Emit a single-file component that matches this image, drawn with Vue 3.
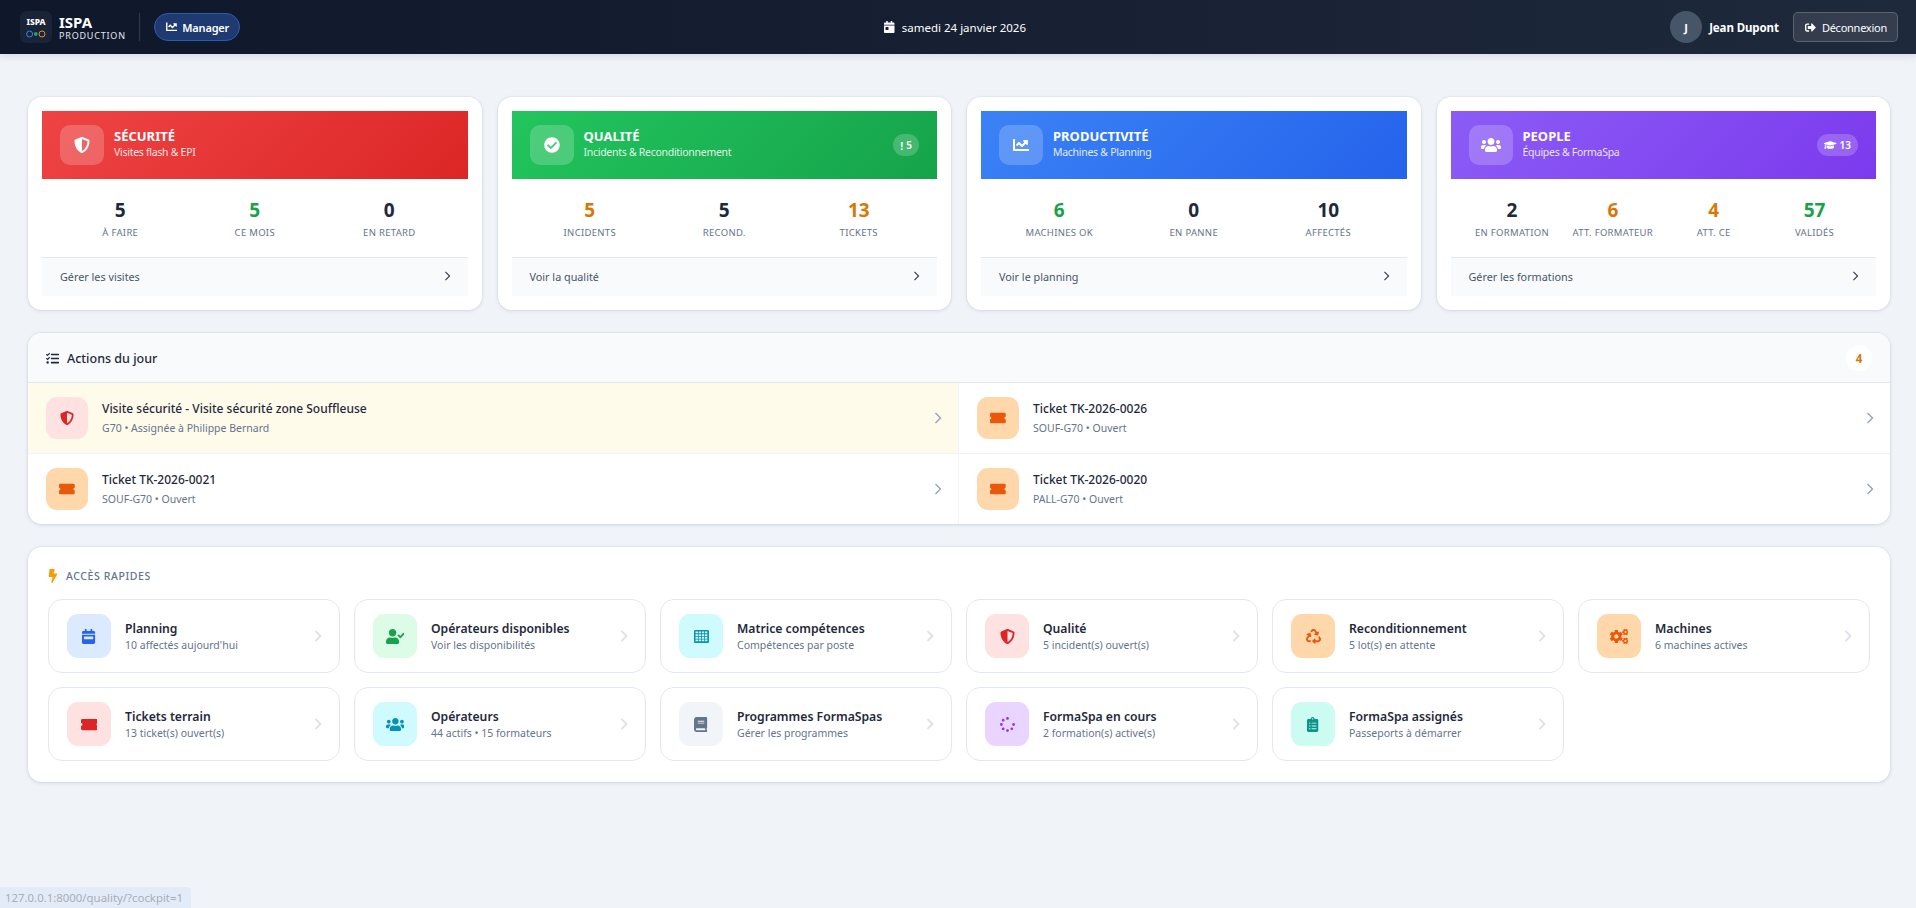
<script setup>
// FontAwesome style glyphs: [viewBox, path]
let gridPath = "M48 32h416c26 0 48 22 48 48v352c0 26-22 48-48 48H48c-26 0-48-22-48-48V80c0-26 22-48 48-48z";
for (let r = 0; r < 4; r++) {
  for (let c = 0; c < 4; c++) {
    gridPath += `M${52 + c * 108} ${84 + r * 92}v62h80v-62z`;
  }
}

const icons = {
  shield: ["0 0 512 512", "M466.5 83.7l-192-80a48.15 48.15 0 0 0-36.9 0l-192 80C27.7 91.1 16 108.6 16 128c0 198.5 114.5 335.7 221.5 380.3 11.8 4.9 25.1 4.9 36.9 0C360.1 472.6 496 349.3 496 128c0-19.4-11.7-36.9-29.5-44.3zM256.1 446.3l-.1-381 175.9 73.3c-3.3 151.4-82.1 261.1-175.8 307.7z"],
  check: ["0 0 512 512", "M504 256c0 136.967-111.033 248-248 248S8 392.967 8 256 119.033 8 256 8s248 111.033 248 248zM227.314 387.314l184-184c6.248-6.248 6.248-16.379 0-22.627l-22.627-22.627c-6.248-6.249-16.379-6.249-22.628 0L216 308.118l-70.059-70.059c-6.248-6.248-16.379-6.248-22.628 0l-22.627 22.627c-6.248 6.248-6.248 16.379 0 22.627l104 104c6.249 6.249 16.379 6.249 22.628.001z"],
  chart: ["0 0 512 512", "M496 384H64V80c0-8.84-7.16-16-16-16H16C7.16 64 0 71.16 0 80v336c0 17.67 14.33 32 32 32h464c8.84 0 16-7.16 16-16v-32c0-8.84-7.16-16-16-16zM464 96H345.94c-21.38 0-32.09 25.85-16.97 40.97l32.4 32.4L288 242.75l-73.37-73.37c-12.5-12.5-32.76-12.5-45.25 0l-68.69 68.69c-6.25 6.25-6.25 16.38 0 22.63l22.62 22.62c6.25 6.25 16.38 6.25 22.63 0L192 237.25l73.37 73.37c12.5 12.5 32.76 12.5 45.25 0l96-96 32.4 32.4c15.12 15.12 40.97 4.41 40.97-16.97V112c.01-8.84-7.15-16-15.99-16z"],
  users: ["0 0 640 512", "M96 224c35.3 0 64-28.7 64-64s-28.7-64-64-64-64 28.7-64 64 28.7 64 64 64zm448 0c35.3 0 64-28.7 64-64s-28.7-64-64-64-64 28.7-64 64 28.7 64 64 64zm32 32h-64c-17.6 0-33.5 7.1-45.1 18.6 40.3 22.1 68.9 62 75.1 109.4h66c17.7 0 32-14.3 32-32v-32c0-35.3-28.7-64-64-64zm-256 0c61.9 0 112-50.1 112-112S381.9 32 320 32 208 82.1 208 144s50.1 112 112 112zm76.8 32h-8.3c-20.8 10-43.9 16-68.5 16s-47.6-6-68.5-16h-8.3C179.6 288 128 339.6 128 403.2V432c0 26.5 21.5 48 48 48h288c26.5 0 48-21.5 48-48v-28.8c0-63.6-51.6-115.2-115.2-115.2zm-223.7-13.4C161.5 263.1 145.6 256 128 256H64c-35.3 0-64 28.7-64 64v32c0 17.7 14.3 32 32 32h65.9c6.3-47.4 34.9-87.3 75.2-109.4z"],
  ticket: ["0 0 576 512", "M528 256c0 26.51 21.49 48 48 48v96c0 26.51-21.49 48-48 48H48c-26.51 0-48-21.49-48-48v-96c26.51 0 48-21.49 48-48s-21.49-48-48-48v-96c0-26.51 21.49-48 48-48h480c26.51 0 48 21.49 48 48v96c-26.51 0-48 21.49-48 48z"],
  calDay: ["0 0 448 512", "M0 464c0 26.5 21.5 48 48 48h352c26.5 0 48-21.5 48-48V192H0v272zm64-192c0-8.8 7.2-16 16-16h96c8.8 0 16 7.2 16 16v96c0 8.8-7.2 16-16 16H80c-8.8 0-16-7.2-16-16v-96zM400 64h-48V16c0-8.8-7.2-16-16-16h-32c-8.8 0-16 7.2-16 16v48H160V16c0-8.8-7.2-16-16-16h-32c-8.8 0-16 7.2-16 16v48H48C21.5 64 0 85.5 0 112v48h448v-48c0-26.5-21.5-48-48-48z"],
  calWeek: ["0 0 448 512", "M0 464c0 26.5 21.5 48 48 48h352c26.5 0 48-21.5 48-48V192H0v272zm64-192c0-8.8 7.2-16 16-16h288c8.8 0 16 7.2 16 16v64c0 8.8-7.2 16-16 16H80c-8.8 0-16-7.2-16-16v-64zM400 64h-48V16c0-8.8-7.2-16-16-16h-32c-8.8 0-16 7.2-16 16v48H160V16c0-8.8-7.2-16-16-16h-32c-8.8 0-16 7.2-16 16v48H48C21.5 64 0 85.5 0 112v48h448v-48c0-26.5-21.5-48-48-48z"],
  userCheck: ["0 0 640 512", "M224 256c70.7 0 128-57.3 128-128S294.7 0 224 0 96 57.3 96 128s57.3 128 128 128zm89.6 32h-16.7c-22.2 10.2-46.9 16-72.9 16s-50.6-5.8-72.9-16h-16.7C60.2 288 0 348.2 0 422.4V464c0 26.5 21.5 48 48 48h352c26.5 0 48-21.5 48-48v-41.6c0-74.2-60.2-134.4-134.4-134.4zm323-128.4l-27.8-28.1c-4.6-4.7-12.1-4.7-16.8-.1l-104.8 104-45.5-45.8c-4.6-4.7-12.1-4.7-16.8-.1l-28.1 27.9c-4.7 4.6-4.7 12.1-.1 16.8l81.7 82.3c4.6 4.7 12.1 4.7 16.8.1l141.3-140.2c4.6-4.7 4.7-12.2.1-16.8z"],
  grid: ["0 0 512 512", gridPath],
  book: ["0 0 448 512", "M448 360V24c0-13.3-10.7-24-24-24H96C43 0 0 43 0 96v320c0 53 43 96 96 96h328c13.3 0 24-10.7 24-24v-16c0-7.5-3.5-14.3-8.9-18.7-4.2-15.4-4.2-59.3 0-74.7 5.4-4.3 8.9-11.1 8.9-18.6zM128 134c0-3.3 2.7-6 6-6h212c3.3 0 6 2.7 6 6v20c0 3.3-2.7 6-6 6H134c-3.3 0-6-2.7-6-6v-20zm0 64c0-3.3 2.7-6 6-6h212c3.3 0 6 2.7 6 6v20c0 3.3-2.7 6-6 6H134c-3.3 0-6-2.7-6-6v-20zm253.4 250H96c-17.7 0-32-14.3-32-32 0-17.6 14.4-32 32-32h285.4c-1.9 17.1-1.9 46.9 0 64z"],
  spinner: ["0 0 512 512", "M304 48c0 26.51-21.49 48-48 48s-48-21.49-48-48 21.49-48 48-48 48 21.49 48 48zm-48 368c-26.51 0-48 21.49-48 48s21.49 48 48 48 48-21.49 48-48-21.49-48-48-48zm208-208c-26.51 0-48 21.49-48 48s21.49 48 48 48 48-21.49 48-48-21.49-48-48-48zM96 256c0-26.51-21.49-48-48-48S0 229.49 0 256s21.49 48 48 48 48-21.49 48-48zm12.922 99.078c-26.51 0-48 21.49-48 48s21.49 48 48 48 48-21.49 48-48c0-26.509-21.491-48-48-48zm294.156 0c-26.51 0-48 21.49-48 48s21.49 48 48 48 48-21.49 48-48c0-26.509-21.49-48-48-48zM108.922 60.922c-26.51 0-48 21.49-48 48s21.49 48 48 48 48-21.49 48-48-21.491-48-48-48z"],
  recycle: ["0 0 512 512", "M184.561 261.903c3.232 13.997-12.123 24.635-24.068 17.168l-40.736-25.455-50.867 81.402C55.606 356.273 70.96 384 96.012 384H148c6.627 0 12 5.373 12 12v40c0 6.627-5.373 12-12 12H96.115c-75.334 0-121.302-83.048-81.408-146.88l50.822-81.388-40.725-25.448c-12.081-7.547-8.966-25.961 4.879-29.158l110.237-25.45c8.611-1.988 17.201 3.381 19.189 11.99l25.452 110.237zm98.561-182.915l41.289 66.076-40.74 25.457c-12.051 7.528-9 25.953 4.879 29.158l110.237 25.45c8.672 1.999 17.215-3.438 19.189-11.99l25.45-110.237c3.197-13.844-11.99-24.719-24.068-17.168l-40.687 25.424-41.263-66.082c-37.521-60.033-125.209-60.171-162.816 0l-17.963 28.766c-3.51 5.62-1.8 13.021 3.82 16.533l33.919 21.195c5.62 3.512 13.024 1.803 16.536-3.817l17.961-28.743c12.712-20.341 41.973-19.676 54.257-.022zM497.288 301.12l-27.515-44.065c-3.511-5.623-10.916-7.334-16.538-3.821l-33.861 21.159c-5.62 3.512-7.33 10.915-3.818 16.536l27.564 44.112c13.257 21.211-2.057 48.96-27.136 48.96H320V336.02c0-14.213-17.242-21.383-27.313-11.313l-80 79.981c-6.249 6.248-6.249 16.379 0 22.627l80 79.989C302.689 517.308 320 510.3 320 495.989V448h95.88c75.274 0 121.335-82.997 81.408-146.88z"],
  cogs: ["0 0 640 512", "M512.1 191l-8.2 14.3c-3 5.3-9.4 7.5-15.1 5.4-11.8-4.4-22.6-10.7-32.1-18.6-4.6-3.8-5.8-10.5-2.8-15.7l8.2-14.3c-6.9-8-12.3-17.3-15.9-27.4h-16.5c-6 0-11.2-4.3-12.2-10.3-2-12-2.1-24.6 0-37.1 1-6 6.2-10.4 12.2-10.4h16.5c3.6-10.1 9-19.4 15.9-27.4l-8.2-14.3c-3-5.2-1.9-11.9 2.8-15.7 9.5-7.9 20.4-14.2 32.1-18.6 5.7-2.1 12.1.1 15.1 5.4l8.2 14.3c10.5-1.9 21.2-1.9 31.7 0L552 6.3c3-5.3 9.4-7.5 15.1-5.4 11.8 4.4 22.6 10.7 32.1 18.6 4.6 3.8 5.8 10.5 2.8 15.7l-8.2 14.3c6.9 8 12.3 17.3 15.9 27.4h16.5c6 0 11.2 4.3 12.2 10.3 2 12 2.1 24.6 0 37.1-1 6-6.2 10.4-12.2 10.4h-16.5c-3.6 10.1-9 19.4-15.9 27.4l8.2 14.3c3 5.2 1.9 11.9-2.8 15.7-9.5 7.9-20.4 14.2-32.1 18.6-5.7 2.1-12.1-.1-15.1-5.4l-8.2-14.3c-10.4 1.9-21.2 1.9-31.7 0zm-10.5-58.8c38.5 29.6 82.4-14.3 52.8-52.8-38.5-29.7-82.4 14.3-52.8 52.8zM386.3 286.1l33.7 16.8c10.1 5.8 14.5 18.1 10.5 29.1-8.9 24.2-26.4 46.4-42.6 65.8-7.4 8.9-20.2 11.1-30.3 5.3l-29.1-16.8c-16 13.7-34.6 24.6-54.9 31.7v33.6c0 11.6-8.3 21.6-19.7 23.6-24.6 4.2-50.4 4.4-75.9 0-11.5-2-20-11.9-20-23.6V418c-20.3-7.2-38.9-18-54.9-31.7L74 403c-10 5.8-22.9 3.6-30.3-5.3-16.2-19.4-33.3-41.6-42.2-65.7-4-10.9.4-23.2 10.5-29.1l33.3-16.8c-3.9-20.9-3.9-42.4 0-63.4L12 205.8c-10.1-5.8-14.6-18.1-10.5-29 8.9-24.2 26-46.4 42.2-65.8 7.4-8.9 20.2-11.1 30.3-5.3l29.1 16.8c16-13.7 34.6-24.6 54.9-31.7V57.1c0-11.5 8.2-21.5 19.6-23.5 24.6-4.2 50.5-4.4 76-.1 11.5 2 20 11.9 20 23.6v33.6c20.3 7.2 38.9 18 54.9 31.7l29.1-16.8c10-5.8 22.9-3.6 30.3 5.3 16.2 19.4 33.2 41.6 42.1 65.8 4 10.9.1 23.2-10 29.1l-33.7 16.8c3.9 21 3.9 42.5 0 63.5zm-117.6 21.1c59.2-77-28.7-164.9-105.7-105.7-59.2 77 28.7 164.9 105.7 105.7zm243.4 182.7l-8.2 14.3c-3 5.3-9.4 7.5-15.1 5.4-11.8-4.4-22.6-10.7-32.1-18.6-4.6-3.8-5.8-10.5-2.8-15.7l8.2-14.3c-6.9-8-12.3-17.3-15.9-27.4h-16.5c-6 0-11.2-4.3-12.2-10.3-2-12-2.1-24.6 0-37.1 1-6 6.2-10.4 12.2-10.4h16.5c3.6-10.1 9-19.4 15.9-27.4l-8.2-14.3c-3-5.2-1.9-11.9 2.8-15.7 9.5-7.9 20.4-14.2 32.1-18.6 5.7-2.1 12.1.1 15.1 5.4l8.2 14.3c10.5-1.9 21.2-1.9 31.7 0l8.2-14.3c3-5.3 9.4-7.5 15.1-5.4 11.8 4.4 22.6 10.7 32.1 18.6 4.6 3.8 5.8 10.5 2.8 15.7l-8.2 14.3c6.9 8 12.3 17.3 15.9 27.4h16.5c6 0 11.2 4.3 12.2 10.3 2 12 2.1 24.6 0 37.1-1 6-6.2 10.4-12.2 10.4h-16.5c-3.6 10.1-9 19.4-15.9 27.4l8.2 14.3c3 5.2 1.9 11.9-2.8 15.7-9.5 7.9-20.4 14.2-32.1 18.6-5.7 2.1-12.1-.1-15.1-5.4l-8.2-14.3c-10.4 1.9-21.2 1.9-31.7 0zM501.6 431c38.5 29.6 82.4-14.3 52.8-52.8-38.5-29.6-82.4 14.3-52.8 52.8z"],
  clipboard: ["0 0 384 512", "M336 64h-80c0-35.3-28.7-64-64-64s-64 28.7-64 64H48C21.5 64 0 85.5 0 112v352c0 26.5 21.5 48 48 48h288c26.5 0 48-21.5 48-48V112c0-26.5-21.5-48-48-48zM96 424c-13.3 0-24-10.7-24-24s10.7-24 24-24 24 10.7 24 24-10.7 24-24 24zm0-96c-13.3 0-24-10.7-24-24s10.7-24 24-24 24 10.7 24 24-10.7 24-24 24zm0-96c-13.3 0-24-10.7-24-24s10.7-24 24-24 24 10.7 24 24-10.7 24-24 24zm96-192c13.3 0 24 10.7 24 24s-10.7 24-24 24-24-10.7-24-24 10.7-24 24-24zm128 368c0 4.4-3.6 8-8 8H168c-4.4 0-8-3.6-8-8v-16c0-4.4 3.6-8 8-8h144c4.4 0 8 3.6 8 8v16zm0-96c0 4.4-3.6 8-8 8H168c-4.4 0-8-3.6-8-8v-16c0-4.4 3.6-8 8-8h144c4.4 0 8 3.6 8 8v16zm0-96c0 4.4-3.6 8-8 8H168c-4.4 0-8-3.6-8-8v-16c0-4.4 3.6-8 8-8h144c4.4 0 8 3.6 8 8v16z"],
  bolt: ["0 0 320 512", "M296 160H180.6l42.6-129.8C227.2 15 215.7 0 200 0H56C44 0 33.8 8.9 32.2 20.8l-32 240C-1.7 275.2 9.5 288 24 288h118.7L96.6 482.5c-3.6 15.2 8 29.5 23.3 29.5 8.4 0 16.4-4.4 20.8-12l176-304c9.3-15.9-2.2-36-20.7-36z"],
  signOut: ["0 0 512 512", "M497 273L329 441c-15 15-41 4.5-41-17v-96H152c-13.3 0-24-10.7-24-24v-96c0-13.3 10.7-24 24-24h136V88c0-21.4 25.9-32 41-17l168 168c9.3 9.4 9.3 24.6 0 34zM192 436v-40c0-6.6-5.4-12-12-12H96c-17.7 0-32-14.3-32-32V160c0-17.7 14.3-32 32-32h84c6.6 0 12-5.4 12-12V76c0-6.6-5.4-12-12-12H96c-53 0-96 43-96 96v192c0 53 43 96 96 96h84c6.6 0 12-5.4 12-12z"],
  tasks: ["0 0 512 512", "M139.61 35.5a12 12 0 0 0-17 0L58.93 98.81l-22.7-22.12a12 12 0 0 0-17 0L3.53 92.41a12 12 0 0 0 0 17l47.59 47.4a12.78 12.78 0 0 0 17.61 0l15.59-15.62L156.52 69a12.09 12.09 0 0 0 .09-17zm0 159.19a12 12 0 0 0-17 0l-63.68 63.72-22.7-22.1a12 12 0 0 0-17 0L3.53 252a12 12 0 0 0 0 17L51 316.5a12.77 12.77 0 0 0 17.6 0l15.7-15.69 72.2-72.22a12 12 0 0 0 .09-16.9zM64 368c-26.49 0-48.59 21.5-48.59 48S37.53 464 64 464a48 48 0 0 0 0-96zm432 16H208a16 16 0 0 0-16 16v32a16 16 0 0 0 16 16h288a16 16 0 0 0 16-16v-32a16 16 0 0 0-16-16zm0-320H208a16 16 0 0 0-16 16v32a16 16 0 0 0 16 16h288a16 16 0 0 0 16-16V80a16 16 0 0 0-16-16zm0 160H208a16 16 0 0 0-16 16v32a16 16 0 0 0 16 16h288a16 16 0 0 0 16-16v-32a16 16 0 0 0-16-16z"],
  cap: ["0 0 640 512", "M622.34 153.2L343.4 67.5c-15.2-4.67-31.6-4.67-46.79 0L17.66 153.2c-23.54 7.23-23.54 38.36 0 45.59l48.63 14.94c-10.67 13.19-17.23 29.28-17.88 46.9C38.78 266.15 32 276.11 32 288c0 10.78 5.68 19.85 13.86 25.65L20.33 428.53C18.11 438.52 25.71 448 35.94 448h56.11c10.24 0 17.84-9.48 15.62-19.47L82.14 313.65C90.32 307.85 96 298.78 96 288c0-11.57-6.47-21.25-15.66-26.87.76-15.02 8.44-28.3 20.69-36.72L296.6 284.5c9.06 2.78 26.44 6.25 46.79 0l278.95-85.7c23.55-7.24 23.55-38.36 0-45.6zM352.79 315.09c-28.53 8.76-52.84 3.92-65.59 0l-145.02-44.55L128 384c0 35.35 85.96 64 192 64s192-28.65 192-64l-14.18-113.47-145.03 44.56z"],
};

const pillars = [
  {
    key: "red", icon: "shield", title: "SÉCURITÉ", sub: "Visites flash & EPI", link: "Gérer les visites",
    stats: [
      { value: 5, label: "À faire", tone: "" },
      { value: 5, label: "Ce mois", tone: "green" },
      { value: 0, label: "En retard", tone: "" },
    ],
  },
  {
    key: "green", icon: "check", title: "QUALITÉ", sub: "Incidents & Reconditionnement", link: "Voir la qualité",
    badge: { text: "!", count: 5 },
    stats: [
      { value: 5, label: "Incidents", tone: "orange" },
      { value: 5, label: "Recond.", tone: "" },
      { value: 13, label: "Tickets", tone: "orange" },
    ],
  },
  {
    key: "blue", icon: "chart", title: "PRODUCTIVITÉ", sub: "Machines & Planning", link: "Voir le planning",
    stats: [
      { value: 6, label: "Machines OK", tone: "green" },
      { value: 0, label: "En panne", tone: "" },
      { value: 10, label: "Affectés", tone: "" },
    ],
  },
  {
    key: "purple", icon: "users", title: "PEOPLE", sub: "Équipes & FormaSpa", link: "Gérer les formations",
    badge: { icon: "cap", count: 13 },
    stats: [
      { value: 2, label: "En formation", tone: "" },
      { value: 6, label: "Att. formateur", tone: "orange" },
      { value: 4, label: "Att. CE", tone: "orange" },
      { value: 57, label: "Validés", tone: "green" },
    ],
  },
];

const actions = [
  { icon: "shield", tone: "t-red", title: "Visite sécurité - Visite sécurité zone Souffleuse", sub: "G70 • Assignée à Philippe Bernard", urgent: true },
  { icon: "ticket", tone: "t-orange", title: "Ticket TK-2026-0026", sub: "SOUF-G70 • Ouvert" },
  { icon: "ticket", tone: "t-orange", title: "Ticket TK-2026-0021", sub: "SOUF-G70 • Ouvert" },
  { icon: "ticket", tone: "t-orange", title: "Ticket TK-2026-0020", sub: "PALL-G70 • Ouvert" },
];

const shortcuts = [
  { icon: "calWeek", tone: "t-blue", title: "Planning", sub: "10 affectés aujourd'hui" },
  { icon: "userCheck", tone: "t-green", title: "Opérateurs disponibles", sub: "Voir les disponibilités" },
  { icon: "grid", tone: "t-cyan", title: "Matrice compétences", sub: "Compétences par poste" },
  { icon: "shield", tone: "t-red", title: "Qualité", sub: "5 incident(s) ouvert(s)" },
  { icon: "recycle", tone: "t-orange", title: "Reconditionnement", sub: "5 lot(s) en attente" },
  { icon: "cogs", tone: "t-orange", title: "Machines", sub: "6 machines actives" },
  { icon: "ticket", tone: "t-red", title: "Tickets terrain", sub: "13 ticket(s) ouvert(s)" },
  { icon: "users", tone: "t-cyan", title: "Opérateurs", sub: "44 actifs • 15 formateurs" },
  { icon: "book", tone: "t-slate", title: "Programmes FormaSpas", sub: "Gérer les programmes" },
  { icon: "spinner", tone: "t-purple", title: "FormaSpa en cours", sub: "2 formation(s) active(s)" },
  { icon: "clipboard", tone: "t-teal", title: "FormaSpa assignés", sub: "Passeports à démarrer" },
];
</script>

<template>
  <div class="page">
    <header class="topbar">
      <div class="brand">
        <div class="logo">
          <span class="logo-text">ISPA</span>
          <svg class="logo-dots" viewBox="0 0 20 8">
            <circle cx="3.6" cy="4" r="3" fill="none" stroke="#3b82f6" stroke-width="1" />
            <circle cx="9.8" cy="4" r="2" fill="#22a06b" />
            <circle cx="16" cy="4" r="3" fill="none" stroke="#e08a2e" stroke-width="1" />
          </svg>
        </div>
        <div class="brand-name">
          <strong>ISPA</strong>
          <span>PRODUCTION</span>
        </div>
        <div class="brand-sep"></div>
        <div class="role-pill">
          <svg class="fa" :viewBox="icons.chart[0]"><path :d="icons.chart[1]" /></svg>
          Manager
        </div>
      </div>
      <div class="today">
        <svg class="fa" :viewBox="icons.calDay[0]"><path :d="icons.calDay[1]" /></svg>
        samedi 24 janvier 2026
      </div>
      <div class="user">
        <div class="avatar">J</div>
        <span class="user-name">Jean Dupont</span>
        <button class="logout">
          <svg class="fa" :viewBox="icons.signOut[0]"><path :d="icons.signOut[1]" /></svg>
          Déconnexion
        </button>
      </div>
    </header>

    <main class="content">
      <section class="pillars">
        <article v-for="p in pillars" :key="p.key" class="pillar">
          <div class="banner" :class="p.key">
            <div class="banner-icon">
              <svg class="fa" :viewBox="icons[p.icon][0]"><path :d="icons[p.icon][1]" /></svg>
            </div>
            <div class="banner-text">
              <div class="banner-title">{{ p.title }}</div>
              <div class="banner-sub">{{ p.sub }}</div>
            </div>
            <div v-if="p.badge" class="banner-badge">
              <svg v-if="p.badge.icon" class="fa" :viewBox="icons[p.badge.icon][0]"><path :d="icons[p.badge.icon][1]" /></svg>
              <b v-else>{{ p.badge.text }}</b>
              {{ p.badge.count }}
            </div>
          </div>
          <div class="stats" :style="{ gridTemplateColumns: `repeat(${p.stats.length}, 1fr)` }">
            <div v-for="s in p.stats" :key="s.label" class="stat">
              <div class="stat-value" :class="s.tone">{{ s.value }}</div>
              <div class="stat-label">{{ s.label }}</div>
            </div>
          </div>
          <div class="pillar-link">
            <span>{{ p.link }}</span>
            <svg class="chev" viewBox="0 0 8 12"><path d="M1.5 1l5 5-5 5" /></svg>
          </div>
        </article>
      </section>

      <section class="panel actions">
        <div class="actions-head">
          <div class="actions-title">
            <svg class="fa" :viewBox="icons.tasks[0]"><path :d="icons.tasks[1]" /></svg>
            Actions du jour
          </div>
          <span class="count">4</span>
        </div>
        <div class="actions-grid">
          <div v-for="a in actions" :key="a.title" class="action" :class="{ urgent: a.urgent }">
            <div class="tile-icon small" :class="a.tone">
              <svg class="fa" :viewBox="icons[a.icon][0]"><path :d="icons[a.icon][1]" /></svg>
            </div>
            <div class="action-text">
              <div class="action-title">{{ a.title }}</div>
              <div class="action-sub">{{ a.sub }}</div>
            </div>
            <svg class="chev action-chev" viewBox="0 0 8 12"><path d="M1.5 1l5 5-5 5" /></svg>
          </div>
        </div>
      </section>

      <section class="panel quick">
        <div class="quick-title">
          <svg class="bolt" :viewBox="icons.bolt[0]"><path :d="icons.bolt[1]" /></svg>
          ACCÈS RAPIDES
        </div>
        <div class="quick-grid">
          <div v-for="t in shortcuts" :key="t.title" class="tile">
            <div class="tile-icon" :class="t.tone">
              <svg class="fa" :viewBox="icons[t.icon][0]"><path :d="icons[t.icon][1]" /></svg>
            </div>
            <div class="tile-text">
              <div class="tile-title">{{ t.title }}</div>
              <div class="tile-sub">{{ t.sub }}</div>
            </div>
            <svg class="chev tile-chev" viewBox="0 0 8 12"><path d="M1.5 1l5 5-5 5" /></svg>
          </div>
        </div>
      </section>
    </main>

    <div class="status-link">127.0.0.1:8000/quality/?cockpit=1</div>
  </div>
</template>

<style>
html,
body {
  margin: 0;
  background: #f1f5f9;
}
</style>

<style scoped>
.page {
  min-height: 908px;
  background: #f0f4f9;
  font-family: "Noto Sans", "Open Sans", sans-serif;
  color: #1e293b;
}

.fa {
  display: block;
  height: 1em;
  fill: currentColor;
}

.chev {
  width: 8px;
  height: 12px;
  flex-shrink: 0;
  fill: none;
  stroke: currentColor;
  stroke-width: 1.4;
}

.topbar {
  height: 54px;
  box-sizing: border-box;
  display: flex;
  align-items: center;
  justify-content: space-between;
  padding: 0 18px 0 20px;
  background: linear-gradient(90deg, #0f172a, #1e293b);
  box-shadow: 0 2px 8px rgba(15, 23, 42, 0.12);
  color: #fff;
}

.brand {
  display: flex;
  align-items: center;
}

.logo {
  width: 32px;
  height: 32px;
  border-radius: 7px;
  background: #1a2438;
  display: flex;
  flex-direction: column;
  align-items: center;
  justify-content: center;
  gap: 4px;
}

.logo-text {
  font-size: 8.5px;
  line-height: 9px;
  font-weight: 800;
}

.logo-dots {
  width: 20px;
  height: 8px;
}

.brand-name {
  margin-left: 7px;
  display: flex;
  flex-direction: column;
}

.brand-name strong {
  font-size: 15px;
  line-height: 16px;
  font-weight: 700;
}

.brand-name span {
  font-size: 9px;
  line-height: 11px;
  letter-spacing: 0.8px;
  color: #e2e8f0;
}

.brand-sep {
  width: 1px;
  height: 28px;
  margin: 0 14px 0 13px;
  background: rgba(255, 255, 255, 0.15);
}

.role-pill {
  height: 28px;
  box-sizing: border-box;
  padding: 0 10px 0 11px;
  display: flex;
  align-items: center;
  gap: 5px;
  border-radius: 14px;
  background: #1e3a70;
  border: 1px solid #2b5cb0;
  font-size: 11px;
  font-weight: 600;
  letter-spacing: -0.2px;
}

.role-pill .fa {
  font-size: 11.5px;
}

.today {
  display: flex;
  align-items: center;
  gap: 7px;
  font-size: 11.5px;
}

.today .fa {
  font-size: 12px;
}

.user {
  display: flex;
  align-items: center;
  justify-content: flex-end;
}

.avatar {
  width: 32px;
  height: 32px;
  border-radius: 50%;
  background: #475569;
  display: flex;
  align-items: center;
  justify-content: center;
  font-size: 11px;
  font-weight: 700;
}

.user-name {
  margin: 0 14px 0 7px;
  font-size: 11.5px;
  font-weight: 700;
  letter-spacing: -0.1px;
}

.logout {
  height: 30px;
  padding: 0 10px 0 11px;
  display: flex;
  align-items: center;
  gap: 6px;
  font-family: inherit;
  font-size: 11px;
  letter-spacing: -0.25px;
  color: #fff;
  border-radius: 5px;
  background: rgba(255, 255, 255, 0.1);
  border: 1px solid rgba(255, 255, 255, 0.2);
}

.logout .fa {
  font-size: 11px;
}

.content {
  padding: 43px 26px 0 28px;
  display: flex;
  flex-direction: column;
  gap: 23px;
}

.pillars {
  display: grid;
  grid-template-columns: repeat(4, 1fr);
  gap: 16px;
}

.pillar {
  background: #fff;
  border-radius: 14px;
  padding: 14px;
  box-shadow: 0 1px 4px rgba(15, 23, 42, 0.1), 0 0 0 1px #e8edf3;
}

.banner {
  height: 68px;
  padding: 0 18px;
  display: flex;
  align-items: center;
  gap: 10px;
  color: #fff;
}

.banner.red {
  background: linear-gradient(135deg, #ef4444, #dc2626);
}

.banner.green {
  background: linear-gradient(135deg, #22c55e, #16a34a);
}

.banner.blue {
  background: linear-gradient(135deg, #3b82f6, #2563eb);
}

.banner.purple {
  background: linear-gradient(135deg, #8b5cf6, #7c3aed);
}

.banner-icon {
  width: 44px;
  height: 40px;
  border-radius: 10px;
  background: rgba(255, 255, 255, 0.2);
  display: flex;
  align-items: center;
  justify-content: center;
  font-size: 16px;
}

.banner-text {
  flex: 1;
  padding-bottom: 4px;
}

.banner-title {
  font-size: 13px;
  line-height: 18px;
  font-weight: 700;
}

.banner-sub {
  font-size: 10.5px;
  line-height: 15px;
  letter-spacing: -0.28px;
  color: rgba(255, 255, 255, 0.88);
}

.banner-badge {
  height: 22px;
  padding: 0 7px;
  display: flex;
  align-items: center;
  gap: 3px;
  border-radius: 11px;
  background: rgba(255, 255, 255, 0.2);
  font-size: 10px;
  font-weight: 600;
}

.banner-badge .fa {
  font-size: 10px;
}

.banner-badge b {
  font-size: 11px;
  font-weight: 600;
}

.stats {
  display: grid;
  gap: 6px;
  padding: 18px 14px 17px;
  text-align: center;
}

.stat-value {
  font-size: 19px;
  line-height: 26px;
  font-weight: 700;
}

.stat-value.green {
  color: #16a34a;
}

.stat-value.orange {
  color: #d97706;
}

.stat-label {
  margin-top: 3px;
  font-size: 9.5px;
  line-height: 14px;
  letter-spacing: 0.3px;
  text-transform: uppercase;
  color: #64748b;
  white-space: nowrap;
}

.pillar-link {
  height: 39px;
  box-sizing: border-box;
  padding: 0 17px 2px 18px;
  display: flex;
  align-items: center;
  justify-content: space-between;
  background: #f8fafc;
  border-top: 1px solid #e2e8f0;
  font-size: 10.8px;
  color: #475569;
}

.pillar-link .chev {
  width: 7px;
  height: 10px;
  color: #334155;
}

.panel {
  background: #fff;
  border-radius: 14px;
  box-shadow: 0 1px 4px rgba(15, 23, 42, 0.12), 0 0 0 1px #e8edf3;
  overflow: hidden;
}

.actions-head {
  height: 50px;
  box-sizing: border-box;
  padding: 1px 18px 0;
  display: flex;
  align-items: center;
  justify-content: space-between;
  background: #f8fafc;
  border-bottom: 1px solid #e2e8f0;
}

.actions-title {
  display: flex;
  align-items: center;
  gap: 8px;
  font-size: 12.5px;
  font-weight: 500;
}

.actions-title .fa {
  font-size: 13px;
}

.count {
  width: 26px;
  height: 26px;
  border-radius: 50%;
  background: #fff;
  display: flex;
  align-items: center;
  justify-content: center;
  color: #d97706;
  font-size: 11.5px;
  font-weight: 700;
}

.actions-grid {
  display: grid;
  grid-template-columns: 1fr 1fr;
}

.action {
  padding: 14px 16px 14px 18px;
  display: flex;
  align-items: center;
  gap: 14px;
  border-bottom: 1px solid #f1f5f9;
}

.action:nth-child(odd) {
  border-right: 1px solid #f1f5f9;
}

.action:nth-last-child(-n + 2) {
  border-bottom: none;
}

.action.urgent {
  background: #fffbeb;
}

.action-text {
  flex: 1;
}

.action-title {
  font-size: 12px;
  line-height: 18px;
  font-weight: 500;
  color: #1e293b;
}

.action-sub {
  margin-top: 3px;
  font-size: 10.5px;
  line-height: 15px;
  color: #64748b;
}

.action-chev {
  color: #94a3b8;
}

.tile-icon {
  width: 44px;
  height: 44px;
  flex-shrink: 0;
  border-radius: 11px;
  display: flex;
  align-items: center;
  justify-content: center;
  font-size: 15px;
}

.tile-icon.small {
  width: 42px;
  height: 42px;
  font-size: 14px;
}

.t-red {
  background: #fee2e2;
  color: #dc2626;
}

.t-orange {
  background: #fed7aa;
  color: #ea580c;
}

.t-blue {
  background: #dbeafe;
  color: #2563eb;
}

.t-green {
  background: #dcfce7;
  color: #16a34a;
}

.t-cyan {
  background: #cffafe;
  color: #0891b2;
}

.t-slate {
  background: #f1f5f9;
  color: #64748b;
}

.t-purple {
  background: #e9d5ff;
  color: #9333ea;
}

.t-teal {
  background: #ccfbf1;
  color: #0d9488;
}

.quick {
  padding: 20px 20px 21px;
}

.quick-title {
  height: 18px;
  margin-bottom: 14px;
  display: flex;
  align-items: center;
  gap: 8px;
  font-size: 10.5px;
  font-weight: 500;
  letter-spacing: 0.6px;
  color: #64748b;
}

.bolt {
  width: 10px;
  height: 14px;
  fill: #f59e0b;
}

.quick-grid {
  display: grid;
  grid-template-columns: repeat(6, 1fr);
  gap: 14px;
}

.tile {
  padding: 14px 17px 14px 18px;
  display: flex;
  align-items: center;
  gap: 14px;
  border: 1px solid #e2e8f0;
  border-radius: 14px;
}

.tile-text {
  flex: 1;
  min-width: 0;
}

.tile-title {
  font-size: 12.2px;
  line-height: 18px;
  font-weight: 600;
  white-space: nowrap;
}

.tile-sub {
  font-size: 10.5px;
  line-height: 15px;
  color: #64748b;
  white-space: nowrap;
}

.tile-chev {
  stroke-width: 1.8;
  color: #dde2ea;
}

.status-link {
  position: fixed;
  left: 0;
  bottom: 0;
  height: 21px;
  padding: 0 8px 0 5px;
  display: flex;
  align-items: center;
  background: #e4ebf8;
  border-top-right-radius: 4px;
  font-size: 11.4px;
  color: #a8aeb8;
}
</style>
